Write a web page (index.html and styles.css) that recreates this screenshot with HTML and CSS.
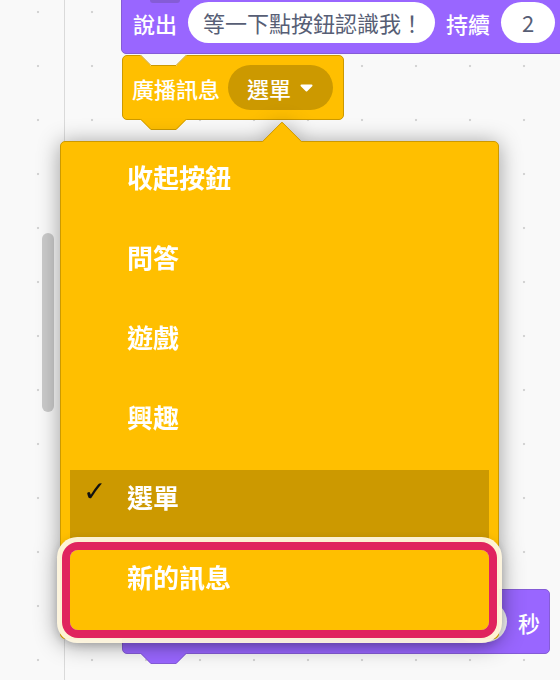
FILE: index.html
```html
<!DOCTYPE html>
<html>
	<head>
		<meta charset="UTF-8">
		<title>廣播訊息</title>
		<link rel="stylesheet" href="styles.css">
	</head>
	<body>
		<aside class="flyout">
			<div class="scroll_thumb"></div>
		</aside>

		<main class="canvas">
			<!-- 說出 ... 持續 -->
			<div class="block looks say_top">
				<span class="prev_tab"></span>
				<span class="label">說出</span>
				<span class="field">等一下點按鈕認識我！</span>
				<span class="label">持續</span>
				<span class="field num">2</span>
			</div>

			<!-- 廣播訊息 -->
			<div class="block events broadcast">
				<svg class="notch" width="47" height="12" viewBox="0 0 47 12">
					<path d="M0 0 L11 11 H36 L47 0 Z" fill="#f9f9f9"/>
					<path d="M0.5 0 L11 10.5 H36 L46.5 0" fill="none" stroke="#cc9900"/>
				</svg>
				<span class="label">廣播訊息</span>
				<span class="menu_field">
					選單
					<svg width="13" height="8" viewBox="0 0 13 8"><path d="M1.5 1.5 H11.5 L6.5 6.5 Z" fill="#fff" stroke="#fff" stroke-width="2" stroke-linejoin="round"/></svg>
				</span>
				<svg class="tab" width="47" height="12" viewBox="0 0 47 12">
					<path d="M0 0 L11 11 H36 L47 0 Z" fill="#ffbf00"/>
					<path d="M0.5 0 L11 10.5 H36 L46.5 0" fill="none" stroke="#cc9900"/>
				</svg>
			</div>

			<!-- 下一個積木 -->
			<div class="block looks say_bottom">
				<span class="field num">2</span>
				<span class="label">秒</span>
				<svg class="tab" width="47" height="12" viewBox="0 0 47 12">
					<path d="M0 0 L11 11 H36 L47 0 Z" fill="#9966ff"/>
					<path d="M0.5 0 L11 10.5 H36 L46.5 0" fill="none" stroke="#855cd6"/>
				</svg>
			</div>

			<!-- 下拉選單 -->
			<div class="dropdown">
				<span class="pointer"></span>
				<ul class="options">
					<li><span class="check"></span>收起按鈕</li>
					<li><span class="check"></span>問答</li>
					<li><span class="check"></span>遊戲</li>
					<li><span class="check"></span>興趣</li>
					<li class="selected"><span class="check">✓</span>選單</li>
					<li class="flagged"><span class="check"></span>新的訊息</li>
				</ul>
			</div>
		</main>
	</body>
</html>
```

FILE: styles.css
```css
*{padding: 0;margin: 0;box-sizing: border-box;}
li{list-style: none;}

body{
	display: flex;
	height: 680px;
	overflow: hidden;
	font-family: "Noto Sans CJK TC", "Noto Sans", sans-serif;
	background-color: #f9f9f9;
	background-image: radial-gradient(circle, #d4d4d4 0, #d4d4d4 1px, transparent 1.6px);
	background-size: 54px 54px;
	background-position: 11px -15px;
}

/* 左邊積木區 */
.flyout{width: 65px;height: 680px;border-right: 1px solid #dadada;flex: none;}
.flyout .scroll_thumb{width: 12px;height: 179px;margin: 233px 0 0 42px;border-radius: 6px;background: #cacaca;}

.canvas{flex: 1;position: relative;height: 680px;}

/* 積木 */
.block{position: absolute;display: flex;align-items: center;width: max-content;border: 1px solid;border-radius: 5px;color: #fff;font-size: 22px;font-weight: 500;white-space: nowrap;}
.block .label{line-height: 30px;}
.looks{background: #9966ff;border-color: #855cd6;}
.events{background: #ffbf00;border-color: #cc9900;}

.field{height: 41px;line-height: 41px;padding: 0 12px 0 15px;border-radius: 21px;background: #fff;color: #575e75;font-weight: 400;}
.field.num{min-width: 54px;padding: 0;text-align: center;}

.say_top{left: 56px;top: -9px;height: 63px;padding: 0 12px 0 11px;gap: 11px;}
.prev_tab{position: absolute;left: 28px;top: 8px;width: 30px;height: 3px;background: #855cd6;border-radius: 0 0 4px 4px;}

.broadcast{left: 57px;top: 55px;height: 65px;padding: 0 10px 0 9px;gap: 8px;}
.menu_field{display: flex;align-items: center;gap: 9px;height: 45px;padding: 0 20px 0 19px;border-radius: 23px;background: #cc9900;}

.say_bottom{left: 57px;top: 589px;width: 428px;height: 65px;padding: 0 9px 0 0;gap: 11px;justify-content: flex-end;}

.notch{position: absolute;left: 17px;top: -1px;}
.tab{position: absolute;left: 17px;bottom: -12px;}

/* 下拉選單 */
.dropdown{
	position: absolute;left: -5px;top: 141px;width: 439px;
	padding: 8px 9px;
	background: #ffbf00;
	border: 1px solid #cc9900;
	border-radius: 5px;
	filter: drop-shadow(0 2px 11px rgba(0,0,0,.38));
}
.dropdown .pointer{position: absolute;left: 207px;top: -15px;width: 28px;height: 28px;background: #ffbf00;border-top: 1px solid #cc9900;border-left: 1px solid #cc9900;transform: rotate(45deg);border-radius: 2px 0 0 0;}

.options>li{display: flex;height: 80px;padding-left: 13px;line-height: 53px;font-size: 26px;font-weight: 700;color: #fff;}
.options .check{width: 44px;line-height: 44px;font-family: "DejaVu Sans", sans-serif;font-size: 28px;font-weight: 700;color: #111;}
.options>.selected{background: #cc9900;}
.options>.flagged{
	border-radius: 8px;
	box-shadow: 0 0 0 8px #e0245e, 0 0 0 13px rgba(255,247,222,.95), 0 2px 10px 13px rgba(0,0,0,.15);
}
```
